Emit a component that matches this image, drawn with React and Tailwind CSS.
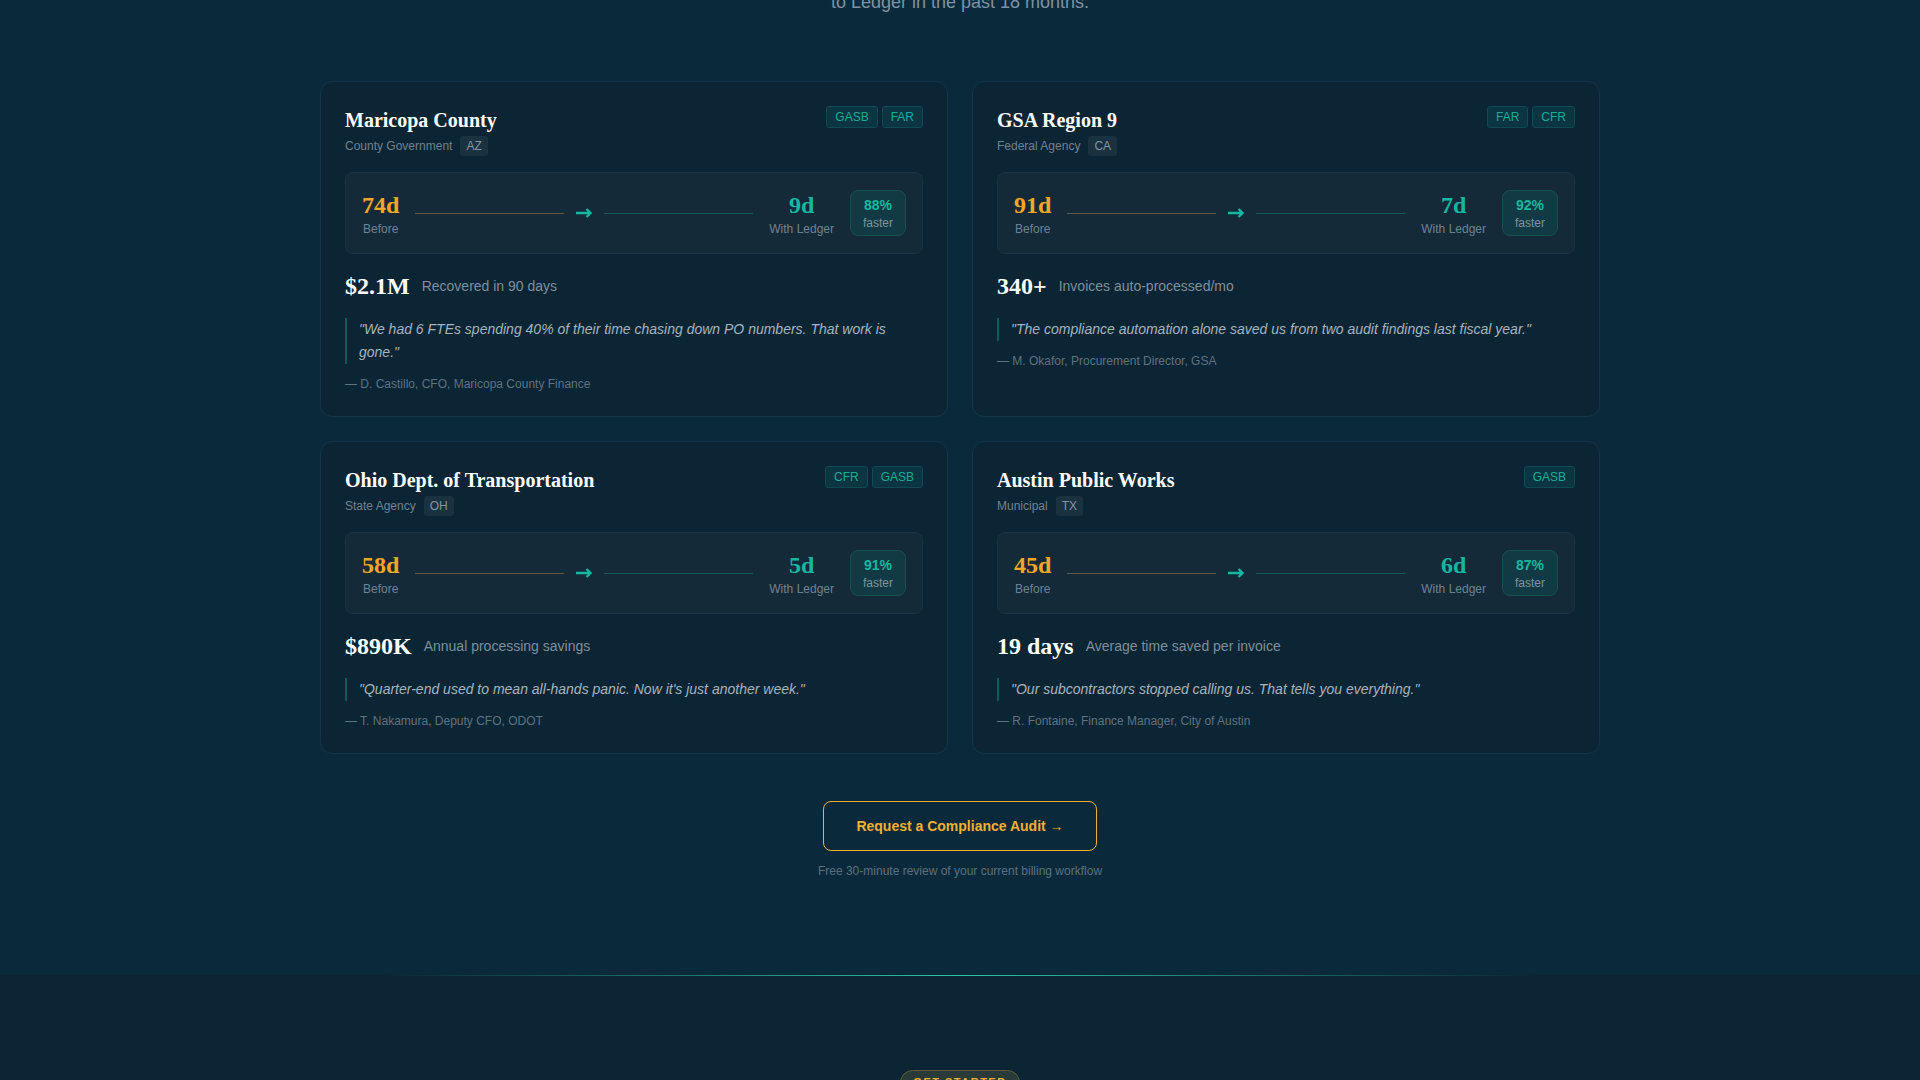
const serif = 'font-["Liberation_Serif",serif]';

const CARDS = [
  { name: "Maricopa County", type: "County Government", st: "AZ", tags: ["GASB", "FAR"], before: "74d", after: "9d", pct: "88%", val: "$2.1M", label: "Recovered in 90 days", quote: "\"We had 6 FTEs spending 40% of their time chasing down PO numbers. That work is gone.\"", who: "— D. Castillo, CFO, Maricopa County Finance" },
  { name: "GSA Region 9", type: "Federal Agency", st: "CA", tags: ["FAR", "CFR"], before: "91d", after: "7d", pct: "92%", val: "340+", label: "Invoices auto-processed/mo", quote: "\"The compliance automation alone saved us from two audit findings last fiscal year.\"", who: "— M. Okafor, Procurement Director, GSA" },
  { name: "Ohio Dept. of Transportation", type: "State Agency", st: "OH", tags: ["CFR", "GASB"], before: "58d", after: "5d", pct: "91%", val: "$890K", label: "Annual processing savings", quote: "\"Quarter-end used to mean all-hands panic. Now it's just another week.\"", who: "— T. Nakamura, Deputy CFO, ODOT" },
  { name: "Austin Public Works", type: "Municipal", st: "TX", tags: ["GASB"], before: "45d", after: "6d", pct: "87%", val: "19 days", label: "Average time saved per invoice", quote: "\"Our subcontractors stopped calling us. That tells you everything.\"", who: "— R. Fontaine, Finance Manager, City of Austin" },
];

function Card({ c }) {
  return (
    <div className="rounded-xl border border-[#123648] bg-[#0c2534] p-6">
      <div className="flex items-start justify-between">
        <div>
          <h3 className={`${serif} text-[20px] font-bold leading-[28px] text-white`}>{c.name}</h3>
          <div className="mt-[2px] flex items-center gap-2 text-[12px] leading-[20px] text-[#6f8291]">
            <span>{c.type}</span>
            <span className="rounded-[3px] bg-[#1a3140] px-[6px] text-[#8296a3]">{c.st}</span>
          </div>
        </div>
        <div className="flex gap-1">
          {c.tags.map((t) => (
            <span key={t} className="rounded-[3px] border border-[#0e4a50] bg-[#0b3540] px-2 text-[12px] leading-[20px] text-[#14ae97]">{t}</span>
          ))}
        </div>
      </div>

      <div className="mt-4 flex items-center gap-4 rounded-lg border border-[#1a3443] bg-[#152a39] px-4 py-[15px]">
        <div className="flex flex-col items-center pt-[2px]">
          <span className={`${serif} text-[24px] font-bold leading-[30px] text-[#f5a623]`}>{c.before}</span>
          <span className="text-[12px] leading-[18px] text-[#6f8291]">Before</span>
        </div>
        <div className="flex flex-1 items-center gap-3">
          <div className="h-px flex-1 bg-[#5e5a3f]" />
          <svg className="h-4 w-4 shrink-0" viewBox="0 0 16 16" fill="none" stroke="#14b8a0" strokeWidth="2.4"><path d="M0 8h14.5M10.5 4 14.5 8l-4 4" /></svg>
          <div className="h-px flex-1 bg-[#0f5a5c]" />
        </div>
        <div className="flex flex-col items-center pt-[2px]">
          <span className={`${serif} text-[24px] font-bold leading-[30px] text-[#14b8a0]`}>{c.after}</span>
          <span className="text-[12px] leading-[18px] text-[#6f8291]">With Ledger</span>
        </div>
        <div className="flex h-[46px] w-[56px] flex-col items-center justify-center rounded-lg border border-[#15504f] bg-[#113a44]">
          <span className="text-[14px] font-bold leading-[20px] text-[#14b8a0]">{c.pct}</span>
          <span className="text-[12px] leading-[16px] text-[#7d929e]">faster</span>
        </div>
      </div>

      <div className="mt-4 flex items-center gap-3">
        <span className={`${serif} text-[24px] font-bold leading-[32px] text-white`}>{c.val}</span>
        <span className="text-[14px] text-[#7d8f9c]">{c.label}</span>
      </div>

      <blockquote className="mt-4 border-l-2 border-[#0f5a5c] pl-3 text-[14px] italic leading-[23px] text-[#a5b4bf]">{c.quote}</blockquote>
      <p className="mt-3 text-[12px] leading-[16px] text-[#5f7280]">{c.who}</p>
    </div>
  );
}

export default function App() {
  return (
    <div className='h-screen overflow-hidden bg-[#0a2a3c] font-["Liberation_Sans",sans-serif]'>
      <section className="-mt-[12px]">
        <p className="text-center text-[18px] leading-[28px] text-[#7d93a1]">to Ledger in the past 18 months.</p>
        <div className="mx-auto mt-[65px] grid w-[1280px] grid-cols-2 gap-6">
          {CARDS.map((c) => <Card key={c.name} c={c} />)}
        </div>
        <div className="mt-[47px] flex flex-col items-center">
          <button className="h-[50px] w-[274px] rounded-lg border-[1.5px] border-[#f0b030] text-[14px] font-bold text-[#f0b030]">Request a Compliance Audit →</button>
          <p className="mt-3 text-[12px] leading-[16px] text-[#5a7080]">Free 30-minute review of your current billing workflow</p>
        </div>
      </section>
      <section className="relative mt-[96px] h-[200px] bg-[#0c2534]">
        <div className="absolute inset-x-0 top-0 h-px bg-gradient-to-r from-transparent from-20% via-[#2bc4a8] to-transparent to-80%" />
        <div className="flex justify-center pt-[95px]">
          <span className="rounded-full border border-[#5c5a3c] bg-[#2a3a38] px-3 pb-1 pt-[3px] text-[11px] font-bold leading-[16px] tracking-[1.5px] text-[#f0b030]">GET STARTED</span>
        </div>
      </section>
    </div>
  );
}
